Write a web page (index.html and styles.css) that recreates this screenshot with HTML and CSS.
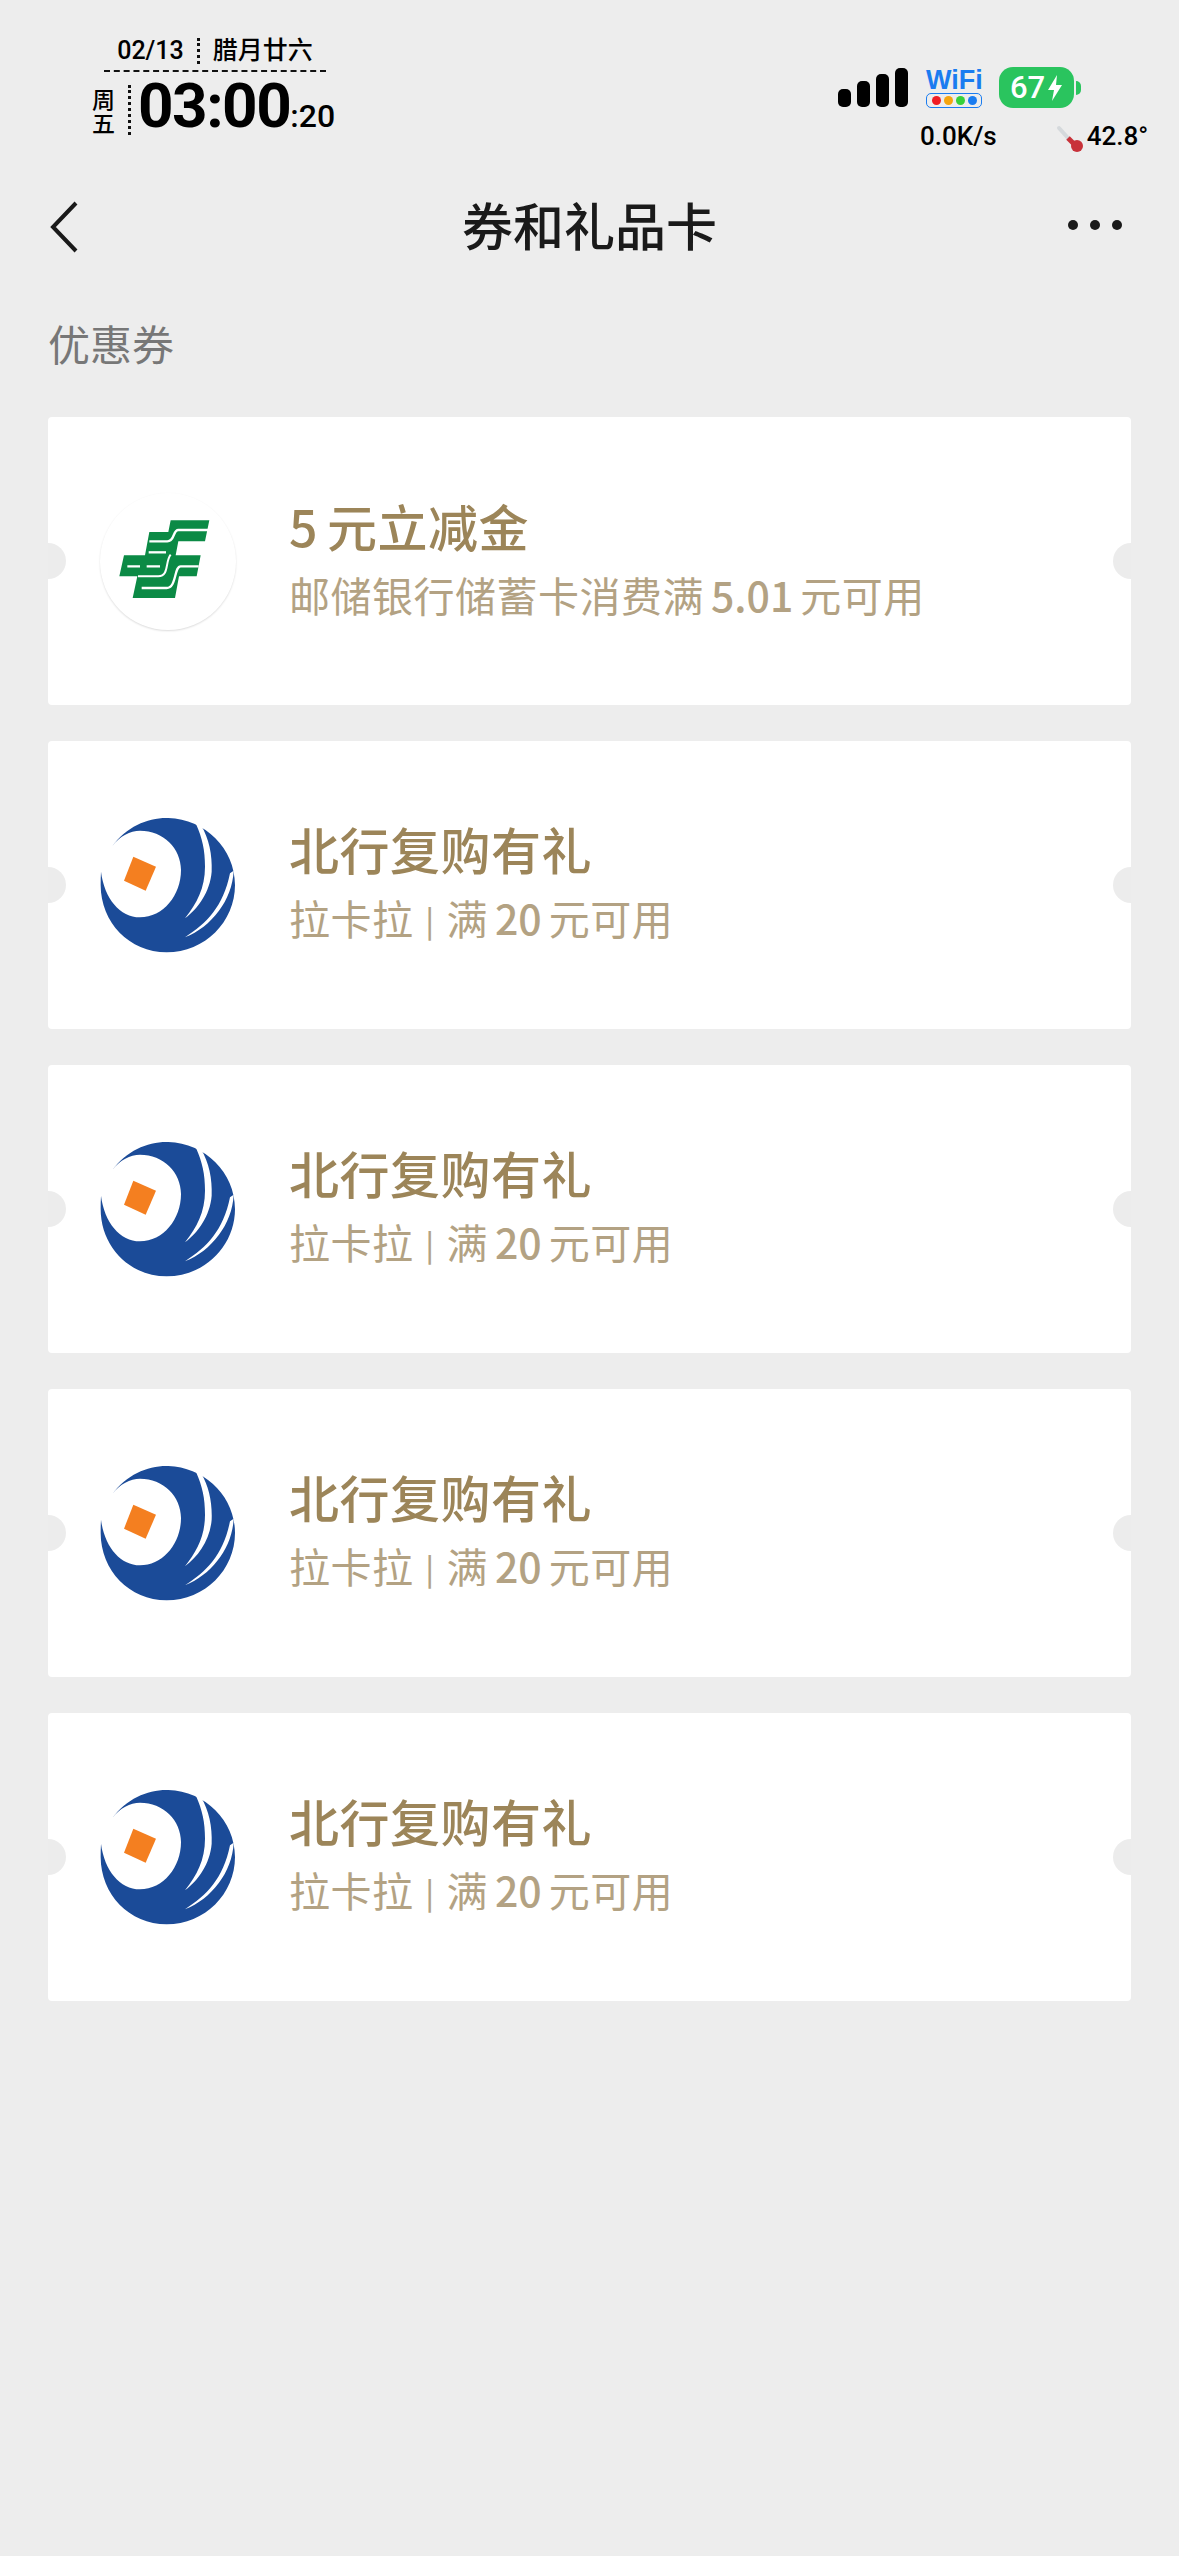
FILE: index.html
```html
<!DOCTYPE html>
<html lang="zh-CN">
	<head>
		<meta charset="UTF-8" />
		<meta name="viewport" content="width=device-width, initial-scale=1.0" />
		<title>券和礼品卡</title>
		<link rel="stylesheet" href="styles.css">
	</head>
	<body>
		<svg class="defs" width="0" height="0">
			<symbol id="psbc" viewBox="-30 -45 408 411">
				<path fill="#0b8a45" d="M182 37H298L285 100H205L197 142H272L260 205H207L195 270H68L82 205H28L42 142H105L118 72H175Z" />
				<path fill="none" stroke="#fff" stroke-width="7" d="M294 66H205C188 66 195 100 172 100H118" />
				<path fill="none" stroke="#fff" stroke-width="7" d="M116 133H168" />
				<path fill="none" stroke="#fff" stroke-width="7" d="M52 175H90M110 175H150" />
				<path fill="none" stroke="#fff" stroke-width="7" d="M266 175H212C192 175 200 240 170 240H95" />
				<path fill="none" stroke="#fff" stroke-width="6" d="M182 140C165 160 178 205 145 205H84" />
			</symbol>
			<symbol id="bob" viewBox="15 21 408 411">
				<path fill="#1b4b98" d="M52 108C95 50 160 22 220 24C330 28 420 115 420 225C420 335 330 427 215 427C103 427 17 337 17 225C17 212 17 198 18 185C28 265 75 322 135 322C205 322 258 255 258 180C258 115 205 62 135 62C105 62 75 78 52 108Z" />
				<path fill="#fff" d="M318 46C342 85 352 135 350 185C345 245 310 295 270 325C305 280 330 235 330 170C330 120 322 85 303 42Z" />
				<path fill="#fff" d="M416 182C412 270 350 350 270 382C335 340 385 290 405 190Z" />
				<path fill="#f47f20" d="M115 140L183 170L152 242L87 212Z" />
			</symbol>
		</svg>

		<header class="status">
			<div class="clock">
				<div class="clock-date">
					<span>02/13</span>
					<i class="dots-v"></i>
					<span>腊月廿六</span>
				</div>
				<div class="clock-main">
					<div class="clock-week">周<br />五</div>
					<i class="dots-v dots-long"></i>
					<div class="clock-time">03:00<small>:20</small></div>
				</div>
			</div>
			<div class="sys">
				<div class="sys-top">
					<div class="signal"><b></b><b></b><b></b><b></b></div>
					<div class="wifi">
						<span class="wifi-name">WiFi</span>
						<div class="wifi-dots"><b class="red"></b><b class="orange"></b><b class="green"></b><b class="blue"></b></div>
					</div>
					<div class="battery">
						<span>67</span>
						<svg width="16" height="26" viewBox="0 0 16 26"><path fill="#fff" d="M10 0L1 15H7L5 26L15 10H9Z" /></svg>
					</div>
					<i class="battery-nub"></i>
				</div>
				<div class="sys-bottom">
					<span class="speed">0.0K/s</span>
					<span class="temp">
						<svg width="28" height="28" viewBox="0 0 28 28">
							<path stroke="#d5d9dc" stroke-width="4" stroke-linecap="round" d="M3 3L12 13" />
							<path stroke="#c8323a" stroke-width="5" d="M12 13L19 20" />
							<circle cx="21" cy="21" r="6" fill="#c8323a" />
						</svg>
						<span>42.8°</span>
					</span>
				</div>
			</div>
		</header>

		<nav class="nav">
			<div class="nav-side">
				<svg width="30" height="52" viewBox="0 0 30 52"><path fill="none" stroke="#1a1a1a" stroke-width="4" d="M27 2L4 26L27 50" /></svg>
			</div>
			<h1>券和礼品卡</h1>
			<div class="nav-side more"><b></b><b></b><b></b></div>
		</nav>

		<h2 class="section-title">优惠券</h2>

		<ul class="coupons">
			<li class="coupon">
				<div class="logo logo-ring"><svg width="136" height="137"><use href="#psbc" /></svg></div>
				<div class="coupon-text">
					<h3><em>5</em>元立减金</h3>
					<p>邮储银行储蓄卡消费满<em>5.01</em>元可用</p>
				</div>
			</li>
			<li class="coupon">
				<div class="logo"><svg width="136" height="137"><use href="#bob" /></svg></div>
				<div class="coupon-text">
					<h3>北行复购有礼</h3>
					<p>拉卡拉<span class="sep">|</span>满<em>20</em>元可用</p>
				</div>
			</li>
			<li class="coupon">
				<div class="logo"><svg width="136" height="137"><use href="#bob" /></svg></div>
				<div class="coupon-text">
					<h3>北行复购有礼</h3>
					<p>拉卡拉<span class="sep">|</span>满<em>20</em>元可用</p>
				</div>
			</li>
			<li class="coupon">
				<div class="logo"><svg width="136" height="137"><use href="#bob" /></svg></div>
				<div class="coupon-text">
					<h3>北行复购有礼</h3>
					<p>拉卡拉<span class="sep">|</span>满<em>20</em>元可用</p>
				</div>
			</li>
			<li class="coupon">
				<div class="logo"><svg width="136" height="137"><use href="#bob" /></svg></div>
				<div class="coupon-text">
					<h3>北行复购有礼</h3>
					<p>拉卡拉<span class="sep">|</span>满<em>20</em>元可用</p>
				</div>
			</li>
		</ul>
	</body>
</html>
```

FILE: styles.css
```css
body,
html {
	margin: 0px;
	background: #ededed;
	width: 100%;
	height: 100%;
	font-family: "Noto Sans CJK SC", Roboto, sans-serif;
}
h1, h2, h3, p, ul {
	margin: 0px;
	padding: 0px;
}
em {
	font-style: normal;
}
.defs {
	position: absolute;
}

/* status bar */
.status {
	height: 160px;
	box-sizing: border-box;
	display: flex;
	justify-content: space-between;
	padding: 32px 32px 0px 92px;
	color: #000;
}
.clock {
	width: 246px;
}
.clock-date {
	display: flex;
	align-items: center;
	justify-content: center;
	gap: 13px;
	width: 222px;
	margin-left: 12px;
	height: 38px;
	border-bottom: 2px dashed #111;
	font-size: 25px;
	font-weight: 500;
	font-family: Roboto, "Noto Sans CJK SC", sans-serif;
	line-height: 34px;
}
.dots-v {
	display: block;
	width: 0px;
	height: 26px;
	border-left: 3px dotted #111;
}
.dots-long {
	height: 50px;
	margin: -3px 7px 0px 13px;
}
.clock-main {
	display: flex;
	align-items: center;
	margin-top: 5px;
}
.clock-week {
	margin-top: -3px;
	font-size: 23px;
	line-height: 24px;
	font-weight: 500;
}
.clock-time {
	font-family: Roboto, sans-serif;
	font-size: 62px;
	line-height: 58px;
	font-weight: 700;
	letter-spacing: -1.5px;
	white-space: nowrap;
}
.clock-time small {
	font-size: 32px;
	font-weight: 500;
	letter-spacing: 0px;
}
.sys {
	width: 310px;
	padding-top: 34px;
	box-sizing: border-box;
}
.sys-top {
	display: flex;
	align-items: flex-end;
	height: 42px;
}
.signal {
	display: flex;
	align-items: flex-end;
	gap: 6px;
	width: 70px;
	height: 39px;
	margin-left: 1px;
	margin-bottom: 1px;
}
.signal b {
	display: block;
	width: 13px;
	border-radius: 5px;
	background: #000;
}
.signal b:nth-child(1) { height: 18px; }
.signal b:nth-child(2) { height: 26px; }
.signal b:nth-child(3) { height: 33px; }
.signal b:nth-child(4) { height: 39px; }
.wifi {
	width: 56px;
	margin-left: 18px;
}
.wifi-name {
	display: block;
	height: 26px;
	line-height: 26px;
	text-align: center;
	font-family: "Liberation Sans", sans-serif;
	font-weight: 700;
	font-size: 27px;
	color: #1a7cf0;
}
.wifi-dots {
	display: flex;
	justify-content: center;
	align-items: center;
	gap: 3px;
	height: 15px;
	box-sizing: border-box;
	border: 1.5px solid #1a7cf0;
	border-radius: 5px;
}
.wifi-dots b {
	display: block;
	width: 9px;
	height: 9px;
	border-radius: 50%;
}
.red { background: #f01c24; }
.orange { background: #f5a50f; }
.green { background: #36d13a; }
.blue { background: #1a7cf0; }
.battery {
	display: flex;
	align-items: center;
	justify-content: center;
	gap: 2px;
	width: 75px;
	height: 41px;
	margin-left: 17px;
	border-radius: 14px;
	background: #2ac45e;
	color: #fff;
	font-family: Roboto, sans-serif;
	font-size: 31px;
	font-weight: 500;
}
.battery-nub {
	display: block;
	width: 5px;
	height: 14px;
	margin: 0px 0px 13px 2px;
	border-radius: 0px 7px 7px 0px;
	background: #2ac45e;
}
.sys-bottom {
	display: flex;
	align-items: center;
	margin-top: 11px;
	font-family: Roboto, sans-serif;
	font-size: 26px;
	font-weight: 500;
	line-height: 32px;
}
.speed {
	margin-left: 83px;
}
.temp {
	display: flex;
	align-items: center;
	margin-left: 59px;
}
.temp svg {
	margin-top: 6px;
	margin-right: 3px;
}

/* nav */
.nav {
	display: flex;
	align-items: center;
	height: 130px;
	box-sizing: border-box;
	padding: 0px 49px;
}
.nav-side {
	width: 80px;
	display: flex;
	margin-top: 3px;
}
.nav h1 {
	flex: 1;
	margin-top: -3px;
	text-align: center;
	font-size: 51px;
	font-weight: 500;
	color: #1a1a1a;
	line-height: 70px;
}
.more {
	justify-content: flex-end;
	gap: 12px;
	padding-right: 8px;
	box-sizing: border-box;
	margin-top: 0px;
}
.more b {
	display: block;
	width: 10px;
	height: 10px;
	border-radius: 50%;
	background: #1a1a1a;
}

.section-title {
	margin: 28px 0px 0px 48px;
	height: 99px;
	font-size: 42px;
	line-height: 50px;
	font-weight: 400;
	color: #777;
}

/* coupons */
.coupons {
	display: flex;
	flex-direction: column;
	gap: 36px;
	margin: 0px 48px;
	list-style: none;
}
.coupon {
	position: relative;
	display: flex;
	align-items: center;
	height: 288px;
	box-sizing: border-box;
	padding-left: 52px;
	border-radius: 4px;
	background: #fff;
	overflow: hidden;
}
.coupon::before,
.coupon::after {
	content: "";
	position: absolute;
	top: 126px;
	width: 36px;
	height: 36px;
	border-radius: 50%;
	background: #ececec;
}
.coupon::before {
	left: -18px;
}
.coupon::after {
	right: -18px;
}
.logo {
	width: 136px;
	height: 137px;
	flex: none;
	margin-right: 53px;
	border-radius: 50%;
}
.logo-ring {
	box-shadow: 0px 1px 2px rgba(0, 0, 0, 0.14);
}
.coupon-text {
	padding-bottom: 8px;
}
.coupon-text h3 {
	margin-bottom: 8px;
	font-size: 50px;
	font-weight: 500;
	line-height: 66px;
	letter-spacing: 0.5px;
	color: #9c8559;
}
.coupon-text h3 em {
	margin-right: 9px;
}
.coupon-text p {
	font-size: 41px;
	font-weight: 400;
	line-height: 56px;
	letter-spacing: 0.5px;
	color: #b3a283;
}
.coupon-text p em {
	margin: 0px 7px;
	letter-spacing: 0px;
	font-weight: 500;
}
.sep {
	margin: 0px 12px;
	font-size: 30px;
	font-weight: 500;
	vertical-align: 3px;
}
```
